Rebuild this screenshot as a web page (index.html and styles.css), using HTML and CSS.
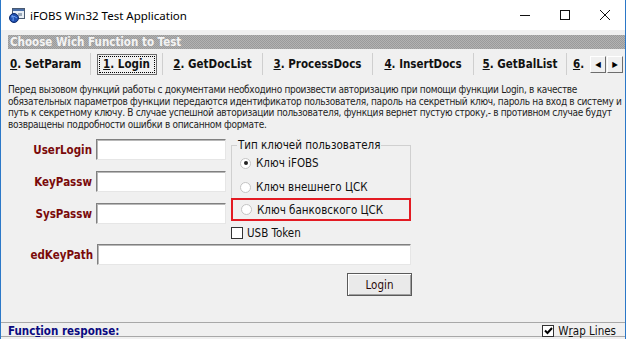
FILE: index.html
```html
<!DOCTYPE html>
<html lang="ru">
<head>
    <meta charset="UTF-8">
    <title>iFOBS Win32 Test Application</title>
    <link rel="stylesheet" href="styles.css">
</head>
<body>
    <div class="window">
        <div class="titlebar">
            <svg class="app-icon" width="16" height="16" viewBox="0 0 16 16">
                <rect x="3.5" y="1.5" width="12" height="10" fill="#e8eef5" stroke="#4a5a70"/>
                <rect x="4" y="2" width="11" height="2" fill="#4a6ea8"/>
                <rect x="9" y="6" width="4" height="3" fill="#9aa8b8"/>
                <circle cx="5" cy="11" r="4.5" fill="#1f4fb0" stroke="#0d2a6a"/>
                <path d="M2 10 Q5 8 8 11 M4 14 Q5 11 3 8" stroke="#6fa0ef" fill="none"/>
            </svg>
            <span class="title">iFOBS Win32 Test Application</span>
            <div class="controls">
                <span class="ctl"><svg width="10" height="10" viewBox="0 0 10 10"><path d="M0 5.5h10" stroke="#111" fill="none"/></svg></span>
                <span class="ctl"><svg width="10" height="10" viewBox="0 0 10 10"><rect x="0.5" y="0.5" width="9" height="9" stroke="#111" fill="none"/></svg></span>
                <span class="ctl"><svg width="10" height="10" viewBox="0 0 10 10"><path d="M0 0L10 10M10 0L0 10" stroke="#111" fill="none"/></svg></span>
            </div>
        </div>

        <div class="client">
            <div class="caption">Choose Wich Function to Test</div>

            <div class="tabs">
                <div class="tab first"><u>0</u>. SetParam</div>
                <div class="tab active"><span class="focus"><u>1</u>. Login</span></div>
                <div class="tab"><u>2</u>. GetDocList</div>
                <div class="tab"><u>3</u>. ProcessDocs</div>
                <div class="tab"><u>4</u>. InsertDocs</div>
                <div class="tab"><u>5</u>. GetBalList</div>
                <div class="tab last"><u>6</u>.</div>
                <div class="scroller">
                    <span class="arrow">&#9664;</span>
                    <span class="arrow">&#9654;</span>
                </div>
            </div>

            <p class="desc">Перед вызовом функций работы с документами необходино произвести авторизацию при помощи функции Login, в качестве<br>обязательных параметров функции передаются идентификатор пользователя, пароль на секретный ключ, пароль на вход в систему и<br>путь к секретному ключу. В случае успешной авторизации пользователя, функция вернет пустую строку,- в противном случае будут<br>возвращены подробности ошибки в описанном формате.</p>

            <div class="login-form">
                <div class="fields">
                    <div class="field">
                        <label for="user">UserLogin</label>
                        <input type="text" id="user">
                    </div>
                    <div class="field">
                        <label for="keypass">KeyPassw</label>
                        <input type="text" id="keypass">
                    </div>
                    <div class="field">
                        <label for="syspass">SysPassw</label>
                        <input type="text" id="syspass">
                    </div>
                </div>
                <div class="keys">
                    <fieldset class="group">
                        <legend>Тип ключей пользователя</legend>
                        <div class="radio"><span class="dot checked"></span>Ключ iFOBS</div>
                        <div class="radio second"><span class="dot"></span>Ключ внешнего ЦСК</div>
                        <div class="radio marked"><span class="dot"></span>Ключ банковского ЦСК</div>
                    </fieldset>
                    <div class="check"><span class="box"></span>USB Token</div>
                </div>
            </div>

            <div class="field path">
                <label for="keypath">edKeyPath</label>
                <input type="text" id="keypath">
            </div>

            <div class="actions">
                <button class="btn">Login</button>
            </div>

            <div class="footer">
                <span class="response">Func<u>t</u>ion response:</span>
                <span class="wrap"><span class="box ticked"><svg width="9" height="8" viewBox="0 0 9 8"><path d="M1 3.5L3.5 6L8 1" stroke="#000" stroke-width="2" fill="none"/></svg></span>W<u>r</u>ap Lines</span>
            </div>
        </div>
    </div>
</body>
</html>
```

FILE: styles.css
```css
* {
    box-sizing: border-box;
    margin: 0;
    padding: 0;
}

body {
    width: 629px;
    height: 339px;
    background-color: #fff;
    font-family: 'DejaVu Sans Condensed', 'DejaVu Sans', sans-serif;
    color: #1a1a1a;
    overflow: hidden;
}

.window {
    width: 626px;
    height: 339px;
    border-left: 1px solid #2b78c8;
    border-right: 1px solid #2b78c8;
    display: flex;
    flex-direction: column;
}

/* title bar */
.titlebar {
    height: 30px;
    flex: none;
    display: flex;
    align-items: center;
    background-color: #fff;
    padding-left: 8px;
}

.app-icon {
    margin-right: 5px;
}

.title {
    font-family: 'Noto Sans', 'Open Sans', sans-serif;
    font-size: 11.5px;
    color: #000;
}

.controls {
    margin-left: auto;
    display: flex;
}

.ctl {
    width: 40px;
    height: 30px;
    display: flex;
    align-items: center;
    justify-content: center;
}

/* client area */
.client {
    flex: 1;
    background-color: #f0f0f0;
    padding: 5px 0 0 7px;
    display: flex;
    flex-direction: column;
}

.caption {
    height: 14px;
    background: repeating-conic-gradient(#9a9a9a 0 25%, #b2b2b2 0 50%) 0 0 / 2px 2px;
    color: #f4f4f4;
    font-weight: bold;
    font-size: 11.5px;
    line-height: 14px;
    padding-left: 2px;
}

.tabs {
    margin-top: 3px;
    height: 24px;
    display: flex;
    align-items: center;
}

.tab {
    height: 22px;
    display: flex;
    align-items: center;
    justify-content: center;
    font-weight: bold;
    font-size: 11.5px;
    color: #111;
    border-left: 1px solid #cfcfcf;
}

.tab:nth-child(1) { width: 82px; border-left: none; justify-content: flex-start; padding-left: 2px; }
.tab:nth-child(2) { width: 72px; }
.tab:nth-child(3) { width: 100px; }
.tab:nth-child(4) { width: 110px; }
.tab:nth-child(5) { width: 101px; }
.tab:nth-child(6) { width: 93px; }
.tab:nth-child(7) { width: 24px; }

.focus {
    width: 60px;
    height: 21px;
    display: flex;
    align-items: center;
    justify-content: center;
    border: 1px solid #6d6d6d;
    outline: 1px dotted #000;
    outline-offset: -3px;
    background-color: #f0f0f0;
}

.scroller {
    display: flex;
    gap: 1px;
}

.arrow {
    width: 16px;
    height: 17px;
    display: flex;
    align-items: center;
    justify-content: center;
    font-size: 8px;
    color: #000;
    background-color: #f0f0f0;
    border: 1px solid;
    border-color: #fff #6d6d6d #6d6d6d #fff;
}

.desc {
    margin-top: 8px;
    font-size: 10px;
    letter-spacing: -0.3px;
    line-height: 11.5px;
    color: #1e1e1e;
    white-space: nowrap;
}

/* form */
.login-form {
    margin-top: 9px;
    display: flex;
}

.fields {
    display: flex;
    flex-direction: column;
    gap: 11px;
}

.field {
    display: flex;
    align-items: center;
}

.field label {
    width: 88px;
    padding-right: 4px;
    text-align: right;
    font-weight: bold;
    font-size: 11.5px;
    color: #7a0a0a;
}

.field input {
    width: 130px;
    height: 21px;
    background-color: #fff;
    border: 1px solid;
    border-color: #808080 #e6e6e6 #e6e6e6 #808080;
    box-shadow: inset 1px 1px 0 #b8b8b8;
    outline: none;
}

.keys {
    margin-left: 5px;
    width: 180px;
}

.group {
    border: 1px solid #d0d0d0;
    border-bottom: none;
    padding: 1px 0 0 0;
    font-size: 11.5px;
}

.group legend {
    margin-left: 5px;
    padding: 0 1px;
    line-height: 12px;
    font-size: 11.5px;
    color: #111;
}

.radio {
    height: 22px;
    display: flex;
    align-items: center;
    padding-left: 8px;
    color: #111;
}

.radio.second {
    margin-top: 2px;
}

.radio.marked {
    height: 23px;
    margin: 0 -1px;
    padding-left: 8px;
    border: 2px solid #e31b23;
}

.dot {
    width: 11px;
    height: 11px;
    border-radius: 50%;
    border: 1px solid #c4c4c4;
    background-color: #fff;
    margin-right: 5px;
    display: flex;
    align-items: center;
    justify-content: center;
}

.dot.checked::after {
    content: "";
    width: 4px;
    height: 4px;
    border-radius: 50%;
    background-color: #222;
}

.check {
    height: 16px;
    margin-top: 4px;
    display: flex;
    align-items: center;
    font-size: 11.5px;
    color: #111;
}

.box {
    width: 12px;
    height: 12px;
    border: 1px solid #333;
    background-color: #fff;
    margin-right: 4px;
    display: flex;
    align-items: center;
    justify-content: center;
}

.field.path {
    margin-top: 3px;
}

.field.path label {
    width: 89px;
}

.field.path input {
    width: 314px;
}

.actions {
    width: 404px;
    margin-top: 8px;
    display: flex;
    justify-content: flex-end;
}

.btn {
    width: 65px;
    height: 23px;
    font-family: 'DejaVu Sans Condensed', 'DejaVu Sans', sans-serif;
    font-size: 11.5px;
    color: #2a0a0a;
    background-color: #eaeaea;
    border: 1px solid #5a5a5a;
    box-shadow: inset 1px 1px 0 #fff, inset -1px -1px 0 #a0a0a0;
}

/* bottom */
.footer {
    margin-top: auto;
    margin-left: -7px;
    padding: 0 9px 0 7px;
    height: 17px;
    border-top: 1px solid #a8a8a8;
    display: flex;
    align-items: center;
    justify-content: space-between;
    font-size: 11.5px;
    box-shadow: inset 0 -2px 0 #f0f0f0, inset 0 -3px 0 #a8a8a8;
}

.response {
    font-weight: bold;
    color: #0a0a80;
}

.wrap {
    display: flex;
    align-items: center;
    color: #111;
}
```
